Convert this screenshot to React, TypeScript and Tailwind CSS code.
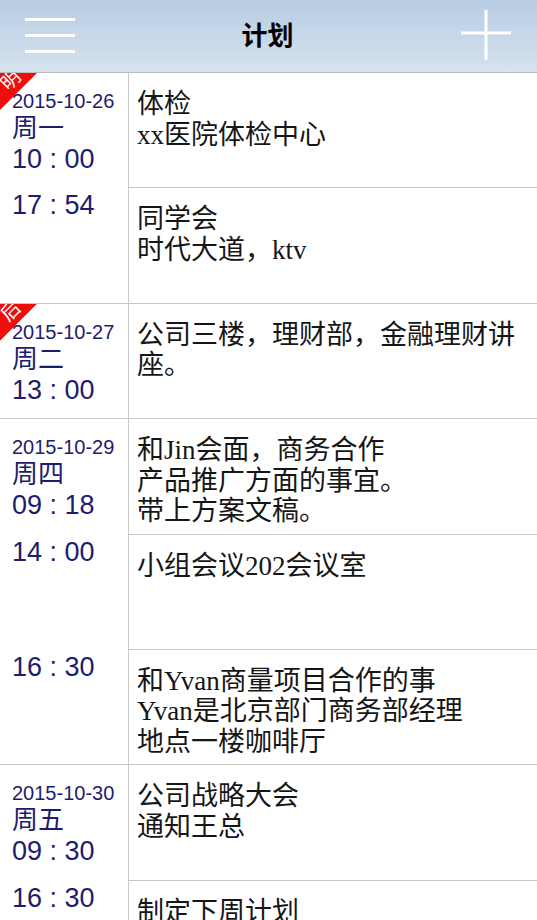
import React from "react";

type Item = { time: string; lines: string[] };
type Group = { date: string; week: string; tag?: string; items: Item[] };

const groups: Group[] = [
  {
    date: "2015-10-26",
    week: "周一",
    tag: "明",
    items: [
      { time: "10 : 00", lines: ["体检", "xx医院体检中心"] },
      { time: "17 : 54", lines: ["同学会", "时代大道，ktv"] },
    ],
  },
  {
    date: "2015-10-27",
    week: "周二",
    tag: "后",
    items: [{ time: "13 : 00", lines: ["公司三楼，理财部，金融理财讲座。"] }],
  },
  {
    date: "2015-10-29",
    week: "周四",
    items: [
      { time: "09 : 18", lines: ["和Jin会面，商务合作", "产品推广方面的事宜。", "带上方案文稿。"] },
      { time: "14 : 00", lines: ["小组会议202会议室"] },
      { time: "16 : 30", lines: ["和Yvan商量项目合作的事", "Yvan是北京部门商务部经理", "地点一楼咖啡厅"] },
    ],
  },
  {
    date: "2015-10-30",
    week: "周五",
    items: [
      { time: "09 : 30", lines: ["公司战略大会", "通知王总"] },
      { time: "16 : 30", lines: ["制定下周计划"] },
    ],
  },
];

const sans = "font-['Liberation_Sans','Noto_Sans_CJK_SC',sans-serif]";
const serif = "font-['Liberation_Serif','Noto_Sans_CJK_SC',serif]";

function Ribbon({ tag }: { tag: string }) {
  return (
    <div className="absolute left-0 top-0 w-[37px] h-[37px] overflow-hidden">
      <div className="absolute inset-0 bg-[#f20d0d] [clip-path:polygon(0_0,100%_0,0_100%)]" />
      <span className="absolute left-[0px] top-[-5px] -rotate-45 text-white text-[19px] leading-[22px] font-['Noto_Sans_CJK_SC',sans-serif]">
        {tag}
      </span>
    </div>
  );
}

function Header() {
  return (
    <header className="h-[73px] flex items-center justify-between border-b border-[#b9bcc0] bg-linear-to-b from-[#b7cde3] to-[#d6e2ee] pl-[25px] pr-[25px]">
      <div className="flex flex-col gap-[13px] w-[50px] -mt-[1px]">
        <span className="h-[3px] bg-white" />
        <span className="h-[3px] bg-white" />
        <span className="h-[3px] bg-white" />
      </div>
      <h1 className="text-[26px] font-bold text-black font-['Noto_Sans_CJK_SC',sans-serif] leading-none -mt-[4px]">
        计划
      </h1>
      <svg width="52" height="52" viewBox="0 0 52 52" className="-mt-[2px]">
        <path d="M26 1v50M1 24h50" stroke="#fff" strokeWidth="3" />
      </svg>
    </header>
  );
}

function GroupBlock({ g }: { g: Group }) {
  return (
    <section>
      {g.items.map((it, i) => {
        const first = i === 0;
        const last = i === g.items.length - 1;
        return (
          <div key={i} className="flex h-[115.4px]">
            <div
              className={`relative w-[129px] shrink-0 border-r border-[#c8c8c8] pl-[12px] text-[#1e1c6c] ${sans} ${
                last ? "border-b" : ""
              }`}
            >
              {first && g.tag && <Ribbon tag={g.tag} />}
              {first ? (
                <div className="pt-[17px]">
                  <div className="text-[20px] leading-[22px]">{g.date}</div>
                  <div className="text-[26px] leading-[27px] font-['Noto_Sans_CJK_SC',sans-serif]">{g.week}</div>
                  <div className="mt-[3px] text-[27px] leading-[34px]">{it.time}</div>
                </div>
              ) : (
                <div className="text-[27px] leading-[34px]">{it.time}</div>
              )}
            </div>
            <div
              className={`flex-1 pl-[8px] pr-[8px] pt-[16px] text-[27px] leading-[30.5px] text-[#161616] border-b border-[#c8c8c8] ${serif}`}
            >
              {it.lines.map((l, j) => (
                <div key={j}>{l}</div>
              ))}
            </div>
          </div>
        );
      })}
    </section>
  );
}

export default function App() {
  return (
    <main className="w-[537px] h-[920px] overflow-hidden bg-white">
      <Header />
      {groups.map((g) => (
        <GroupBlock key={g.date} g={g} />
      ))}
    </main>
  );
}
